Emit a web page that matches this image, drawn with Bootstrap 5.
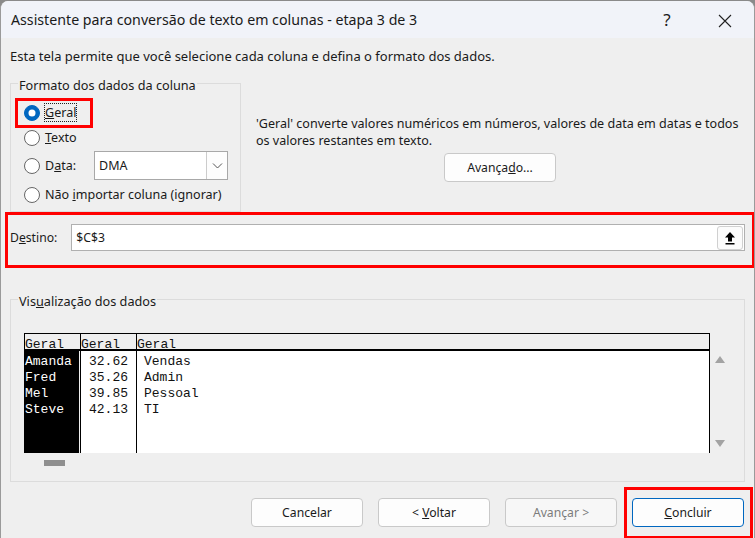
<!DOCTYPE html>
<html lang="pt"><head><meta charset="utf-8"><title>Assistente</title>
<link href="https://cdn.jsdelivr.net/npm/bootstrap@5.3.0/dist/css/bootstrap.min.css" rel="stylesheet">
<style>
html,body{margin:0;height:538px;overflow:hidden;background:#8a8a8a}
body{font-family:"Noto Sans",sans-serif;font-size:12.55px;line-height:17px;color:#1a1a1a}
.win{width:755px;height:537px;margin-top:1px;background:#efefef;border-radius:8px 8px 0 0;border-left:1px solid #9a9a9a;border-right:1px solid #9a9a9a;position:relative;overflow:hidden}
.tbar{height:37px;background:#f1f3f9;padding-left:10px}
.ttl{font-size:14.2px}
.tbtn{width:58px;text-align:center;font-size:17px}
.intro{height:16px;margin:10px 0 0 9px;font-size:13px;line-height:16px}
.upper{height:129px;margin-top:19px}
.grp{border:1px solid #dcdcdc;position:relative}
.grp1{width:231px;height:129px;margin-left:9px;padding:16px 0 0 13px}
.lgd{position:absolute;left:7px;top:-7px;background:#efefef;padding:0 1px;line-height:16px;font-size:12.7px}
.opt{height:29px;gap:5px}
.opt .form-check-input{width:16px;height:16px;margin:0;flex:none;background-color:#fff;border:1.5px solid #666;--bs-form-check-bg:#fff}
.opt .form-check-input:checked{background-color:#0067c0;border-color:#0067c0}
.focusdot{outline:1px dotted #222}
.opt1{height:25px}
.dlabel{width:36px}
.combo{width:134px;height:29px;margin-left:8px;background:#fff;border:1px solid #a8a8a8;padding-left:4px;font-size:12.5px}
.opt3{margin-top:1px}
.cbtn{width:21px;height:27px;border-left:1px solid #ccc;background:#fdfdfd;margin-left:auto}
.upright{margin-left:15px;padding-top:32px;width:495px}
.wbtn{background:#fdfdfd;border:1px solid #c9c9c9;border-radius:4px;height:29px;width:112px;padding:0;color:#1a1a1a;line-height:16px;--bs-btn-font-size:12.2px}
.advbtn{margin:4px 0 0 188px}
.dest{height:56px;margin:0 0 0 4px;border:3px solid #f00;padding:9px 7px 0 2px;width:750px;gap:14px;font-size:12.2px}
.dlbl{padding-top:5px}
.dinput{width:674px;height:27px;background:#fff;border:1px solid #b0b0b0;padding:0 1px 0 4px}
.upbtn{width:26px;height:24px;background:#fbfbfb;border:1px solid #d0d0d0;border-radius:3px}
.grp2{width:735px;height:183px;margin:31px 0 0 9px;padding:33px 0 0 13px}
.pv{width:686px;height:120px;font-family:"Liberation Mono",monospace;font-size:13px;line-height:16px;color:#111}
.pc{height:120px;flex:none}
.ph{height:18px;border-top:1px solid #000;border-left:1px solid #000;border-bottom:2px solid #000;line-height:22px;text-decoration:underline;overflow:hidden}
.pb{height:102px;padding-top:3px;background:#fff}
.pc1{width:56px}.pc2{width:56px}.pc3{width:574px}
.pc1 .pb{background:#000;color:#fff;margin-right:1px;padding-left:1px}
.pc2 .pb{border-left:1px solid #000;text-align:right;padding-right:8px}
.pc3 .pb{border-left:1px solid #000;border-right:1px solid #000;padding-left:7px}
.pc3 .ph{border-right:1px solid #000}
.vs{width:34px;height:120px;padding:23px 0 6px 0;flex:none}
.tri{width:0;height:0;border-left:5px solid transparent;border-right:5px solid transparent;margin-left:5px}
.triu{border-bottom:7px solid #a3a3a3}.trid{border-top:7px solid #a3a3a3}
.thumb{width:21px;height:6px;background:#8f8f8f;margin:7px 0 0 20px}
.foot{margin-top:16px;padding-left:250px;gap:15px}
.wbtn.dis{color:#7c7c7c;background:#f7f7f7}
.wbtn.pri{border:1px solid #0067c0}
.rbox{position:absolute;border:3px solid #f00;pointer-events:none}
.rb1{left:4px;top:14px;width:78px;height:30px}
.rb3{left:623px;top:486px;width:129px;height:52px}
</style></head><body>
<div class="win">
  <div class="tbar d-flex align-items-center">
    <div class="ttl flex-grow-1">Assistente para conversão de texto em colunas - etapa 3 de 3</div>
    <div class="tbtn">?</div>
    <div class="tbtn"><svg width="14" height="14" viewBox="0 0 14 14"><path d="M1 1L13 13M13 1L1 13" stroke="#222" stroke-width="1.1" fill="none"/></svg></div>
  </div>
  <div class="intro">Esta tela permite que você selecione cada coluna e defina o formato dos dados.</div>
  <div class="upper d-flex">
    <div class="grp grp1">
      <div class="lgd">Formato dos dados da coluna</div>
      <div class="rbox rb1"></div>
      <div class="opt opt1 d-flex align-items-center"><input class="form-check-input" type="radio" name="f" checked><span class="focusdot"><u>G</u>eral</span></div>
      <div class="opt opt1 d-flex align-items-center"><input class="form-check-input" type="radio" name="f"><span><u>T</u>exto</span></div>
      <div class="opt opt3 d-flex align-items-center"><input class="form-check-input" type="radio" name="f"><span class="dlabel">D<u>a</u>ta:</span>
        <div class="combo d-flex align-items-center">DMA<div class="cbtn d-flex align-items-center justify-content-center"><svg width="11" height="6" viewBox="0 0 11 6"><path d="M1 .5L5.500 5L10 .5" stroke="#555" fill="none"/></svg></div></div></div>
      <div class="opt d-flex align-items-center"><input class="form-check-input" type="radio" name="f"><span>Não <u>i</u>mportar coluna (ignorar)</span></div>
    </div>
    <div class="upright">
      <div>'Geral' converte valores numéricos em números, valores de data em datas e todos os valores restantes em texto.</div>
      <button class="btn wbtn advbtn" type="button">Avança<u>d</u>o...</button>
    </div>
  </div>
  <div class="dest d-flex">
    <div class="dlbl">D<u>e</u>stino:</div>
    <div class="dinput d-flex align-items-center justify-content-between">$C$3
      <div class="upbtn d-flex align-items-center justify-content-center"><svg width="12" height="14" viewBox="0 0 12 14"><path d="M6 1L11 6.500H8V10.500H4V6.500H1Z M1.500 12H10.500V13.500H1.500Z" fill="#000"/></svg></div>
    </div>
  </div>
  <div class="grp grp2">
    <div class="lgd">Vis<u>u</u>alização dos dados</div>
    <div class="d-flex">
      <div class="pv d-flex">
        <div class="pc pc1"><div class="ph">Geral</div><div class="pb">Amanda<br>Fred<br>Mel<br>Steve</div></div>
        <div class="pc pc2"><div class="ph">Geral</div><div class="pb">32.62<br>35.26<br>39.85<br>42.13</div></div>
        <div class="pc pc3"><div class="ph">Geral</div><div class="pb">Vendas<br>Admin<br>Pessoal<br>TI</div></div>
      </div>
      <div class="vs d-flex flex-column justify-content-between"><div class="tri triu"></div><div class="tri trid"></div></div>
    </div>
    <div class="thumb"></div>
  </div>
  <div class="foot d-flex">
    <button class="btn wbtn" type="button">Cancelar</button>
    <button class="btn wbtn" type="button">&lt; <u>V</u>oltar</button>
    <button class="btn wbtn dis" type="button">Avançar &gt;</button>
    <button class="btn wbtn pri" type="button"><u>C</u>oncluir</button>
  </div>
  <div class="rbox rb3"></div>
</div>
</body></html>
